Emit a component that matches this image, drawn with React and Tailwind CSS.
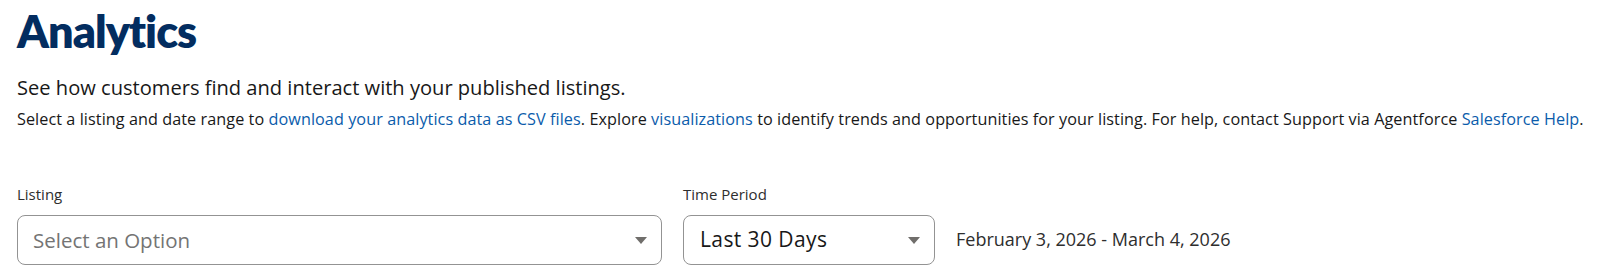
export default function App() {
  const Caret = () => (
    <svg width="12" height="7" viewBox="0 0 12 7" className="shrink-0">
      <path d="M0 0 L12 0 L6 7 Z" fill="#706e6b" />
    </svg>
  );
  return (
    <div className="w-[1600px] h-[276px] bg-white pl-[17px] pt-[4px]" style={{ fontFamily: '"Open Sans", "Noto Sans", sans-serif' }}>
      <h1 className="text-[45px] leading-[54px] font-extrabold text-[#032d60] tracking-[-1px]" style={{ fontFamily: 'Lato, "Noto Sans", sans-serif' }}>Analytics</h1>
      <p className="mt-[17px] text-[20.1px] leading-[26px] text-[#181818]">See how customers find and interact with your published listings.</p>
      <p className="mt-[7px] text-[16.2px] leading-[22px] tracking-[0.07px] text-[#181818]">
        Select a listing and date range to <a className="text-[#0b5cab]">download your analytics data as CSV files</a>. Explore <a className="text-[#0b5cab]">visualizations</a> to identify trends and opportunities for your listing. For help, contact Support via Agentforce <a className="text-[#0b5cab]">Salesforce Help</a>.
      </p>
      <div className="mt-[54px] flex items-end gap-[21px]">
        <div className="flex flex-col">
          <label className="text-[15px] leading-[20px] font-medium text-[#2e2e2e] mb-[11px]">Listing</label>
          <div className="w-[645px] h-[50px] border border-[#939393] rounded-[8px] flex items-center justify-between pl-[15px] pr-[14px]">
            <span className="text-[20.5px] text-[#747474]">Select an Option</span>
            <Caret />
          </div>
        </div>
        <div className="flex flex-col">
          <label className="text-[15px] leading-[20px] font-medium text-[#2e2e2e] mb-[11px]">Time Period</label>
          <div className="w-[252px] h-[50px] border border-[#939393] rounded-[8px] flex items-center justify-between pl-[16px] pr-[14px]">
            <span className="text-[21px] tracking-[0.4px] text-[#181818]">Last 30 Days</span>
            <Caret />
          </div>
        </div>
        <div className="h-[50px] flex items-center">
          <span className="text-[18px] text-[#2e2e2e] -mt-[2px]">February 3, 2026 - March 4, 2026</span>
        </div>
      </div>
    </div>
  );
}
